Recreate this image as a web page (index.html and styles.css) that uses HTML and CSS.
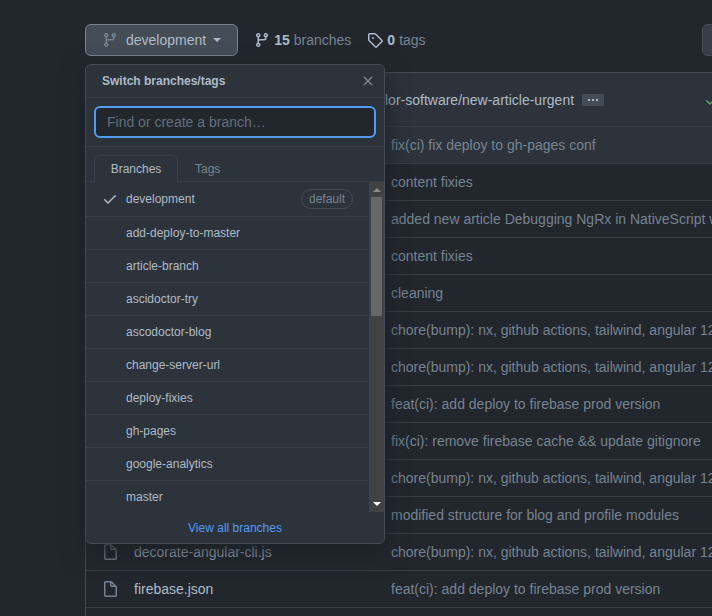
FILE: index.html
```html
<!DOCTYPE html>
<html lang="en">
<head>
<meta charset="utf-8">
<title>Branches</title>
<link rel="stylesheet" href="styles.css">
</head>
<body>
<svg class="defs" aria-hidden="true">
  <symbol id="branch" viewBox="0 0 16 16"><path fill-rule="evenodd" d="M11.75 2.5a.75.75 0 100 1.5.75.75 0 000-1.5zm-2.25.75a2.25 2.25 0 113 2.122V6A2.5 2.5 0 0110 8.5H6a1 1 0 00-1 1v1.128a2.251 2.251 0 11-1.5 0V5.372a2.25 2.25 0 111.5 0v1.836A2.492 2.492 0 016 7h4a1 1 0 001-1v-.628A2.25 2.25 0 019.5 3.25zM4.25 12a.75.75 0 100 1.5.75.75 0 000-1.5zM3.5 3.25a.75.75 0 111.5 0 .75.75 0 01-1.5 0z"/></symbol>
  <symbol id="tag" viewBox="0 0 16 16"><path fill-rule="evenodd" d="M2.5 7.775V2.75a.25.25 0 01.25-.25h5.025a.25.25 0 01.177.073l6.25 6.25a.25.25 0 010 .354l-5.025 5.025a.25.25 0 01-.354 0l-6.25-6.25a.25.25 0 01-.073-.177zm-1.5 0V2.75C1 1.784 1.784 1 2.75 1h5.025c.464 0 .91.184 1.238.513l6.25 6.25a1.75 1.75 0 010 2.474l-5.026 5.026a1.75 1.75 0 01-2.474 0l-6.25-6.25A1.75 1.75 0 011 7.775zM6 5a1 1 0 100 2 1 1 0 000-2z"/></symbol>
  <symbol id="check" viewBox="0 0 16 16"><path fill-rule="evenodd" d="M13.78 4.22a.75.75 0 010 1.06l-7.25 7.25a.75.75 0 01-1.06 0L2.22 9.28a.75.75 0 011.06-1.06L6 10.94l6.72-6.72a.75.75 0 011.06 0z"/></symbol>
  <symbol id="close" viewBox="0 0 16 16"><path fill-rule="evenodd" d="M3.72 3.72a.75.75 0 011.06 0L8 6.94l3.22-3.22a.75.75 0 111.06 1.06L9.06 8l3.22 3.22a.75.75 0 11-1.06 1.06L8 9.06l-3.22 3.22a.75.75 0 01-1.06-1.06L6.94 8 3.72 4.78a.75.75 0 010-1.06z"/></symbol>
  <symbol id="file" viewBox="0 0 16 16"><path fill-rule="evenodd" d="M3.75 1.5a.25.25 0 00-.25.25v12.5c0 .138.112.25.25.25h9.5a.25.25 0 00.25-.25V6H9.75A1.75 1.75 0 018 4.25V1.5H3.75zm5.75.56v2.19c0 .138.112.25.25.25h2.19L9.5 2.06zM2 1.75C2 .784 2.784 0 3.75 0h5.086c.464 0 .909.184 1.237.513l4.414 4.414c.329.328.513.773.513 1.237v8.086A1.75 1.75 0 0113.25 16h-9.5A1.75 1.75 0 012 14.25V1.75z"/></symbol>
</svg>
<main class="page">
  <nav class="toolbar">
    <div class="switcher">
      <button class="branch-button" type="button"><svg class="icon muted"><use href="#branch"/></svg><span>development</span><i class="caret"></i></button>
      <section class="popup" aria-label="Switch branches/tags">
        <header class="popup-header">
          <h2>Switch branches/tags</h2>
          <button class="close" type="button" aria-label="Close"><svg class="icon"><use href="#close"/></svg></button>
        </header>
        <div class="filter"><input type="text" aria-label="Find or create a branch" placeholder="Find or create a branch…"></div>
        <div class="tabs">
          <button class="tab active" type="button">Branches</button>
          <button class="tab" type="button">Tags</button>
        </div>
        <div class="list-area">
          <div class="list">
            <a class="item current" href="#"><svg class="icon"><use href="#check"/></svg><span class="name">development</span><span class="pill">default</span></a>
            <a class="item" href="#">add-deploy-to-master</a>
            <a class="item" href="#">article-branch</a>
            <a class="item" href="#">ascidoctor-try</a>
            <a class="item" href="#">ascodoctor-blog</a>
            <a class="item" href="#">change-server-url</a>
            <a class="item" href="#">deploy-fixies</a>
            <a class="item" href="#">gh-pages</a>
            <a class="item" href="#">google-analytics</a>
            <a class="item" href="#">master</a>
          </div>
          <div class="scrollbar" aria-hidden="true"><i class="arrow up"></i><i class="thumb"></i><i class="arrow down"></i></div>
        </div>
        <footer class="popup-footer"><a href="#">View all branches</a></footer>
      </section>
    </div>
    <a class="stat" href="#"><svg class="icon"><use href="#branch"/></svg><strong>15</strong> <span>branches</span></a>
    <a class="stat" href="#"><svg class="icon"><use href="#tag"/></svg><strong>0</strong> <span>tags</span></a>
    <button class="action" type="button" aria-label="Go to file"></button>
  </nav>
  <section class="files">
    <header class="commit">
      <a href="#">lor-software/new-article-urgent</a>
      <button class="more" type="button" aria-label="Show message"><i></i><i></i><i></i></button>
      <svg class="icon success"><use href="#check"/></svg>
    </header>
    <table>
      <tbody>
        <tr class="hovered"><td></td><td></td><td>fix(ci) fix deploy to gh-pages conf</td></tr>
        <tr><td></td><td></td><td>content fixies</td></tr>
        <tr><td></td><td></td><td>added new article Debugging NgRx in NativeScript with</td></tr>
        <tr><td></td><td></td><td>content fixies</td></tr>
        <tr><td></td><td></td><td>cleaning</td></tr>
        <tr><td></td><td></td><td>chore(bump): nx, github actions, tailwind, angular 12</td></tr>
        <tr><td></td><td></td><td>chore(bump): nx, github actions, tailwind, angular 12</td></tr>
        <tr><td></td><td></td><td>feat(ci): add deploy to firebase prod version</td></tr>
        <tr><td></td><td></td><td>fix(ci): remove firebase cache &amp;&amp; update gitignore</td></tr>
        <tr><td></td><td></td><td>chore(bump): nx, github actions, tailwind, angular 12</td></tr>
        <tr><td></td><td></td><td>modified structure for blog and profile modules</td></tr>
        <tr><td><svg class="icon muted"><use href="#file"/></svg></td><td><a href="#">decorate-angular-cli.js</a></td><td>chore(bump): nx, github actions, tailwind, angular 12</td></tr>
        <tr><td><svg class="icon muted"><use href="#file"/></svg></td><td><a href="#">firebase.json</a></td><td>feat(ci): add deploy to firebase prod version</td></tr>
        <tr><td></td><td></td><td></td></tr>
      </tbody>
    </table>
  </section>
</main>
</body>
</html>
```
FILE: styles.css
```css
:root {
  --bg: #22272e;
  --raised: #2d333b;
  --line: #373e47;
  --border: #444c56;
  --text: #adbac7;
  --muted: #768390;
  --accent: #539bf5;
}
* { box-sizing: border-box; }
html { overflow: hidden; }
body {
  margin: 0;
  height: 100vh;
  overflow: hidden;
  background: var(--bg);
  color: var(--text);
  font: 14px/20px "Liberation Sans", Arial, sans-serif;
}
a { color: inherit; text-decoration: none; }
button, input { font: inherit; color: inherit; margin: 0; }
.defs { position: absolute; width: 0; height: 0; }
.icon { width: 16px; height: 16px; flex: none; fill: currentColor; display: block; }
.muted { color: var(--muted); }

/* The content column runs past the right edge of the window. */
.page { margin: 24px -100px 0 85px; }
.toolbar { display: flex; align-items: center; gap: 16px; margin-bottom: 16px; }
.switcher { position: relative; }
.branch-button {
  display: flex;
  align-items: center;
  height: 32px;
  padding: 0 16px;
  background: var(--border);
  border: 1px solid var(--muted);
  border-radius: 6px;
}
.branch-button span { margin: 0 7px 0 8px; }
.caret { border: 4px solid transparent; border-top-color: currentColor; border-bottom: 0; }
.stat { display: flex; align-items: center; gap: 4px; }
.stat span { color: var(--muted); }
.action {
  margin-left: auto;
  width: 110px;
  height: 32px;
  background: var(--line);
  border: 1px solid var(--border);
  border-radius: 6px;
}

.popup {
  position: absolute;
  top: 40px;
  left: 0;
  z-index: 2;
  width: 300px;
  background: var(--raised);
  border: 1px solid var(--border);
  border-radius: 6px;
  box-shadow: 0 8px 24px #1c2128;
  font-size: 12px;
  line-height: 18px;
}
.popup-header {
  display: flex;
  align-items: center;
  justify-content: space-between;
  height: 33px;
  padding: 0 8px 0 16px;
  border-bottom: 1px solid var(--line);
}
.popup-header h2 { margin: 0; font-size: 12px; }
.close { padding: 0; border: 0; background: none; color: var(--muted); }
.filter { padding: 8px; border-bottom: 1px solid var(--line); }
.filter input {
  display: block;
  width: 100%;
  height: 32px;
  padding: 0 11px;
  font-size: 14px;
  background: var(--bg);
  border: 2px solid var(--accent);
  border-radius: 6px;
  outline: 0;
}
.filter input::placeholder { color: #636e7b; opacity: 1; }
.tabs { display: flex; padding: 8px 8px 0; border-bottom: 1px solid var(--line); }
.tab {
  height: 27px;
  margin-bottom: -1px;
  padding: 0 16px;
  color: var(--muted);
  background: none;
  border: 1px solid transparent;
  border-bottom: 0;
  border-radius: 6px 6px 0 0;
}
.tab.active { width: 84px; padding: 0 15px; color: var(--text); background: var(--raised); border-color: var(--line); }
.list-area { display: flex; height: 330px; overflow: hidden; }
.list { flex: 1; }
.item {
  display: flex;
  align-items: center;
  height: 33px;
  padding: 0 16px 0 40px;
  border-bottom: 1px solid var(--line);
}
.item.current { gap: 8px; height: 35px; padding-left: 16px; }
.name { flex: 1; }
.pill { padding: 0 7px; border: 1px solid var(--border); border-radius: 20px; color: var(--muted); }
.scrollbar {
  display: flex;
  flex-direction: column;
  align-items: center;
  width: 15px;
  background: #424242;
}
.arrow { border: 4px solid transparent; }
.up { margin: 6px 0 5px; border-top: 0; border-bottom-color: #8b8b8b; }
.down { margin: auto 0 6px; border-bottom: 0; border-top-color: #fff; }
.thumb { width: 11px; height: 119px; background: #686868; }
.popup-footer { padding: 7px 0 6px; text-align: center; color: var(--accent); }

.files { background: var(--bg); border: 1px solid var(--border); }
.commit {
  display: flex;
  align-items: center;
  height: 53px;
  padding: 0 91px 0 299px;
  background: var(--raised);
}
.more {
  display: flex;
  align-items: center;
  justify-content: center;
  gap: 2px;
  width: 22px;
  height: 12px;
  margin-left: 8px;
  padding: 0;
  border: 0;
  border-radius: 1px;
  background: var(--border);
}
.more i { width: 2px; height: 2px; background: var(--text); }
.success { margin-left: auto; color: #57ab5a; }
table { width: 100%; table-layout: fixed; border-collapse: separate; border-spacing: 0; }
td { height: 37px; padding: 0; border-top: 1px solid var(--line); white-space: nowrap; overflow: hidden; color: var(--muted); }
td:nth-child(1) { width: 48px; padding-left: 16px; }
td:nth-child(2) { width: 257px; color: var(--text); }
.hovered td { background: var(--raised); }
```
